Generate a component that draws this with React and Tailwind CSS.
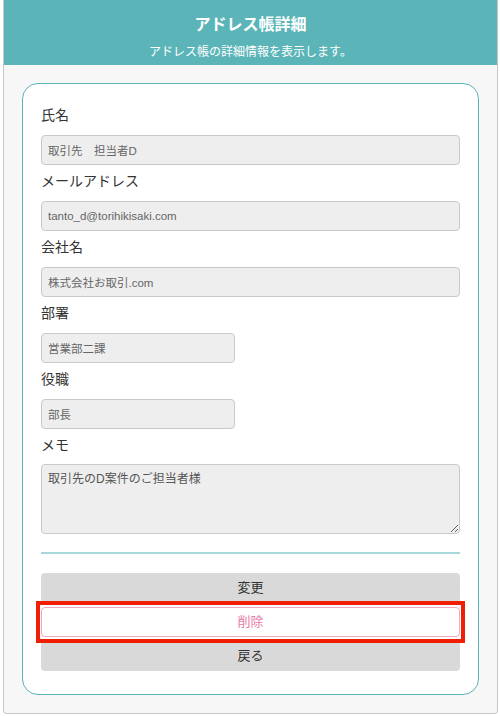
import React from 'react';

const jp = { fontFamily: '"Liberation Sans", "Noto Sans CJK JP", sans-serif' };

const fields = [
  { label: '氏名', value: '取引先　担当者D', wide: true },
  { label: 'メールアドレス', value: 'tanto_d@torihikisaki.com', wide: true },
  { label: '会社名', value: '株式会社お取引.com', wide: true },
  { label: '部署', value: '営業部二課', wide: false },
  { label: '役職', value: '部長', wide: false },
];

function Field({ label, value, wide }) {
  return (
    <div className="flex flex-col">
      <label className="h-5 text-[14px] leading-5 text-[#333]">{label}</label>
      <input
        readOnly
        value={value}
        className={`mt-[10px] h-[30px] rounded border border-[#c9c9c9] bg-[#eeeeee] px-[6px] text-[11.5px] text-[#666] outline-none ${wide ? 'w-full' : 'w-[194px]'}`}
        style={jp}
      />
    </div>
  );
}

export default function App() {
  return (
    <div className="min-h-[716px] bg-white pl-[3px]" style={jp}>
      <div className="w-[495px] rounded-b border-x border-b border-[#c8c8c8] bg-[#f7f7f7] pb-[18px]">
        {/* Header */}
        <div className="flex h-[65px] flex-col items-center bg-[#5bb5b8] text-white">
          <h1 className="mt-[15px] text-[16px] font-bold leading-5">アドレス帳詳細</h1>
          <p className="mt-[9px] text-[12px] leading-4">アドレス帳の詳細情報を表示します。</p>
        </div>

        {/* Card */}
        <div className="mx-[18px] mt-[18px] rounded-2xl border border-[#5bb5b8] bg-white px-[18px] pt-[21px] pb-[23px]">
          <div className="flex flex-col gap-[6px]">
            {fields.map((f) => (
              <Field key={f.label} {...f} />
            ))}
            <div className="flex flex-col">
              <label className="h-5 text-[14px] leading-5 text-[#333]">メモ</label>
              <textarea
                readOnly
                value="取引先のD案件のご担当者様"
                className="mt-[9px] h-[70px] w-full rounded border border-[#c9c9c9] bg-[#eeeeee] px-[6px] py-[5px] text-[12px] text-[#555] outline-none"
                style={jp}
              />
            </div>
          </div>

          <div className="mt-[18px] h-[2px] bg-[#a8d8da]" />

          <div className="mt-[19px] flex flex-col gap-[4px]">
            <button className="h-[30px] w-full rounded bg-[#d9d9d9] text-[13px] text-[#333]">変更</button>
            <div className="relative">
              <button className="h-[30px] w-full rounded border border-[#f0a8c4] bg-white text-[13px] text-[#e879a8]">削除</button>
              <div className="pointer-events-none absolute -inset-x-[5px] -top-[6px] -bottom-[6px] border-[4px] border-[#f01e05]" />
            </div>
            <button className="h-[30px] w-full rounded bg-[#d9d9d9] text-[13px] text-[#333]">戻る</button>
          </div>
        </div>
      </div>
    </div>
  );
}
